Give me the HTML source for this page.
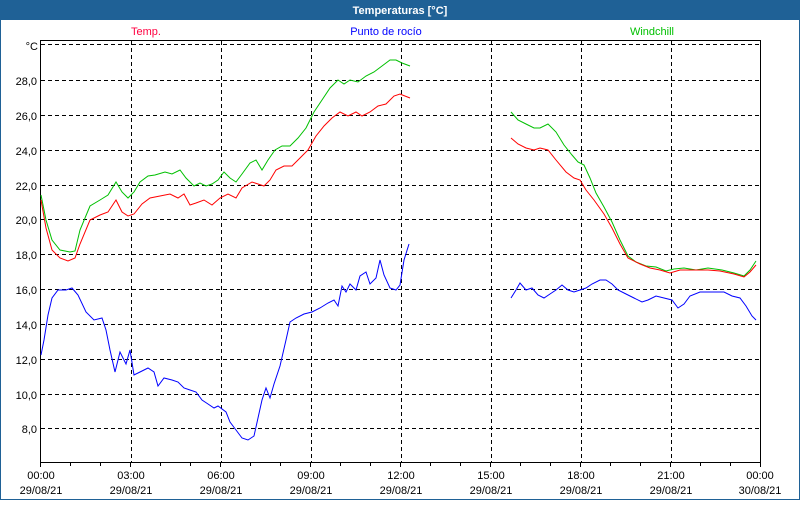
<!DOCTYPE html><html><head><style>
body{margin:0;width:800px;height:500px;background:#fff;overflow:hidden;font-family:"Liberation Sans",sans-serif}
</style></head><body>
<svg width="800" height="500" xmlns="http://www.w3.org/2000/svg" font-family="Liberation Sans, sans-serif" font-size="11">
<rect x="0" y="0" width="800" height="500" fill="#fff"/>
<rect x="0" y="0" width="800" height="20" fill="#1f6196"/>
<rect x="0.5" y="0.5" width="799" height="499" fill="none" stroke="#1f6196"/>
<text x="400" y="14" fill="#fff" font-weight="bold" text-anchor="middle">Temperaturas [°C]</text>
<text x="146" y="35" fill="#ff0040" text-anchor="middle">Temp.</text>
<text x="386" y="35" fill="#0000ff" text-anchor="middle">Punto de rocío</text>
<text x="652" y="35" fill="#00c000" text-anchor="middle">Windchill</text>
<g stroke="#000" stroke-dasharray="4,3" fill="none">
<path d="M41 44.5H760M41 80.5H760M41 115.5H760M41 150.5H760M41 185.5H760M41 219.5H760M41 254.5H760M41 289.5H760M41 324.5H760M41 359.5H760M41 394.5H760M41 428.5H760"/>
<path d="M131.5 41V462M221.5 41V462M311.5 41V462M401.5 41V462M491.5 41V462M581.5 41V462M671.5 41V462"/>
</g>
<path d="M40.5 40V462.5H760.5V40.5H40.5" fill="none" stroke="#000"/>
<g stroke="#000"><path d="M40.5 462v5M70.5 462v4M100.5 462v4M130.5 462v5M160.5 462v4M190.5 462v4M220.5 462v5M250.5 462v4M280.5 462v4M310.5 462v5M340.5 462v4M370.5 462v4M400.5 462v5M430.5 462v4M460.5 462v4M490.5 462v5M520.5 462v4M550.5 462v4M580.5 462v5M610.5 462v4M640.5 462v4M670.5 462v5M700.5 462v4M730.5 462v4M760.5 462v5"/></g>
<g text-anchor="end" fill="#000">
<text x="38" y="50">°C</text>
<text x="37" y="85">28,0</text><text x="37" y="120">26,0</text><text x="37" y="155">24,0</text><text x="37" y="190">22,0</text><text x="37" y="224">20,0</text><text x="37" y="259">18,0</text><text x="37" y="294">16,0</text><text x="37" y="329">14,0</text><text x="37" y="364">12,0</text><text x="37" y="399">10,0</text><text x="37" y="433">8,0</text>
</g>
<g text-anchor="middle" fill="#000">
<text x="41" y="479">00:00</text><text x="41" y="494">29/08/21</text>
<text x="131" y="479">03:00</text><text x="131" y="494">29/08/21</text>
<text x="221" y="479">06:00</text><text x="221" y="494">29/08/21</text>
<text x="311" y="479">09:00</text><text x="311" y="494">29/08/21</text>
<text x="401" y="479">12:00</text><text x="401" y="494">29/08/21</text>
<text x="491" y="479">15:00</text><text x="491" y="494">29/08/21</text>
<text x="581" y="479">18:00</text><text x="581" y="494">29/08/21</text>
<text x="671" y="479">21:00</text><text x="671" y="494">29/08/21</text>
<text x="760" y="479">00:00</text><text x="760" y="494">30/08/21</text>
</g>
<g fill="none" stroke-width="1">
<polyline stroke="#00c000" points="41,195 46,220 52,240 60,250 70,252 75,251 80,230 90,206 100,200 108,195 116,182 122,192 128,198 134,192 140,182 148,176 155,175 165,172 172,174 180,170 186,178 194,186 200,183 206,186 212,184 218,180 224,172 230,178 236,182 242,174 250,163 256,160 262,170 268,160 275,150 282,146 290,146 298,138 306,128 314,112 322,100 330,88 338,80 344,84 350,80 358,82 366,76 374,72 382,66 390,60 396,60 402,63 410,66"/>
<polyline stroke="#00c000" points="511,112 518,120 526,124 534,128 540,128 548,124 556,132 564,145 572,155 578,162 584,165 590,178 596,193 604,207 612,222 620,240 628,256 636,262 646,266 656,267 666,271 674,269 684,268 696,270 708,268 722,270 734,273 744,276 750,270 756,261"/>
<polyline stroke="#ff0000" points="41,200 46,228 52,250 60,258 68,261 75,258 80,244 90,220 100,215 108,212 116,200 122,212 128,216 134,214 142,204 150,198 160,196 170,194 178,198 184,194 190,205 196,203 204,200 212,205 220,198 228,194 236,198 242,188 252,182 258,184 264,186 270,180 276,170 284,166 292,166 300,158 308,150 316,136 324,126 332,118 340,112 348,116 356,112 362,116 370,112 378,106 386,104 394,96 400,94 410,98"/>
<polyline stroke="#ff0000" points="511,138 518,144 526,148 534,150 540,148 548,150 556,160 566,172 574,178 580,180 586,190 594,200 604,214 612,228 620,244 628,258 640,264 650,268 660,270 670,273 680,270 696,270 708,270 720,271 734,274 744,277 750,272 756,265"/>
<polyline stroke="#0000ff" points="41,355 44,340 48,315 52,298 58,290 66,290 72,288 78,295 86,312 94,320 102,318 106,330 110,350 115,372 120,352 126,364 130,350 134,375 140,372 148,368 154,372 158,386 164,378 172,380 178,382 184,388 190,390 196,392 202,400 208,404 214,408 218,406 226,412 230,422 236,430 242,438 248,440 254,436 258,418 262,400 266,388 270,398 274,384 280,366 286,340 290,322 296,318 304,314 312,312 320,308 328,303 334,300 338,306 342,286 346,292 350,284 356,290 360,276 366,272 370,284 376,278 380,260 384,275 390,288 396,290 400,285 404,260 409,244"/>
<polyline stroke="#0000ff" points="511,298 516,290 520,283 526,290 532,288 538,295 544,298 550,294 556,290 562,285 568,290 574,292 580,290 586,288 592,284 600,280 606,280 612,284 618,290 626,294 634,298 642,302 648,300 656,296 664,298 672,300 678,308 684,304 690,296 700,292 712,292 724,292 732,296 740,298 746,306 752,316 756,320"/>
</g>
</svg>
</body></html>
